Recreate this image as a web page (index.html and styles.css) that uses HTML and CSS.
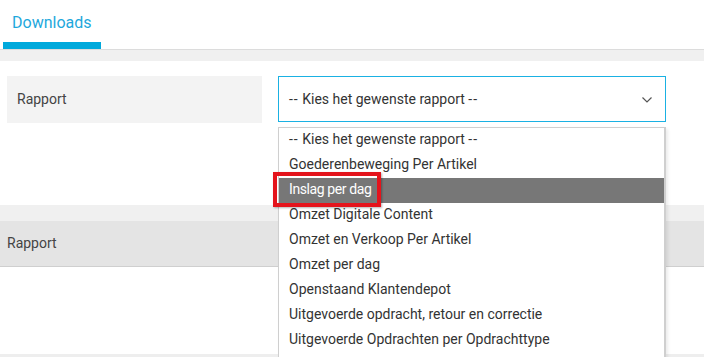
FILE: index.html
```html
<!DOCTYPE html>
<html>
<head>
<meta charset="utf-8">
<link rel="stylesheet" href="styles.css">
</head>
<body>
<div class="tabs">
  <div class="tab">Downloads</div>
</div>
<div class="tabline"></div>
<div class="form-row">
  <div class="label">Rapport</div>
  <div class="select">
    <span><span class="dash">--</span> Kies het gewenste rapport <span class="dash">--</span></span>
    <svg class="chev" width="12" height="8" viewBox="0 0 12 8"><polyline points="1.5,1.5 6,6 10.5,1.5" fill="none" stroke="#555" stroke-width="1.2"/></svg>
  </div>
</div>
<div class="spacer"></div>
<div class="section">
  <div class="thead">Rapport</div>
  <div class="tbody"></div>
</div>
<div class="dropdown">
  <div class="opt"><span class="dash">--</span> Kies het gewenste rapport <span class="dash">--</span></div>
  <div class="opt">Goederenbeweging Per Artikel</div>
  <div class="opt active">Inslag per dag</div>
  <div class="opt">Omzet Digitale Content</div>
  <div class="opt">Omzet en Verkoop Per Artikel</div>
  <div class="opt">Omzet per dag</div>
  <div class="opt">Openstaand Klantendepot</div>
  <div class="opt">Uitgevoerde opdracht, retour en correctie</div>
  <div class="opt">Uitgevoerde Opdrachten per Opdrachttype</div>
</div>
<div class="marker"></div>
</body>
</html>
```
FILE: styles.css
```css
html, body {
  margin: 0;
  padding: 0;
  background: #fff;
  font-family: Roboto, "Noto Sans", sans-serif;
  color: #333;
  overflow: hidden;
}
.tabs {
  height: 49px;
  padding-left: 3px;
  display: flex;
}
.tab {
  width: 98px;
  box-sizing: border-box;
  height: 49px;
  border-bottom: 7px solid #00a9dc;
  color: #1ea8dc;
  font-size: 16px;
  padding: 13px 0 0 9px;
}
.tabline {
  border-top: 1px solid #dcdcdc;
  background: #f0f0f0;
  height: 11px;
}
.form-row {
  display: flex;
  gap: 16px;
  padding: 15px 0 0 7px;
}
.label {
  width: 255px;
  height: 47px;
  background: #f3f3f3;
  box-sizing: border-box;
  padding: 15px 0 0 10px;
  font-size: 14px;
  color: #444;
}
.select {
  width: 388px;
  height: 46px;
  box-sizing: border-box;
  border: 1px solid #1ab1e3;
  display: flex;
  align-items: center;
  justify-content: space-between;
  padding: 0 12px 0 10px;
  font-size: 14px;
  color: #333;
}
.dash { letter-spacing: 1px; }
.chev { margin-top: 1px; }
.spacer { height: 82px; }
.section {
  background: #f0f0f0;
  padding-top: 16px;
}
.thead {
  background: #e4e4e4;
  border-bottom: 1px solid #cfcfcf;
  padding: 14px 0 0 7px;
  height: 31px;
  font-size: 14px;
  color: #444;
}
.tbody {
  height: 87px;
  background: #fff;
  border-bottom: 3px solid #eee;
}
.dropdown {
  position: absolute;
  left: 278px;
  top: 127px;
  width: 388px;
  box-sizing: border-box;
  background: #fff;
  border: 1px solid #cfcfcf;
  border-right-width: 2px;
  padding-bottom: 4px;
  box-shadow: 2px 2px 3px rgba(0,0,0,0.08);
}
.opt {
  height: 25px;
  line-height: 23px;
  padding-left: 10px;
  font-size: 14px;
  color: #333;
  white-space: nowrap;
}
.opt.active {
  background: #777;
  color: #fff;
  letter-spacing: -0.4px;
}
.marker {
  position: absolute;
  left: 273px;
  top: 172px;
  width: 108px;
  height: 35px;
  box-sizing: border-box;
  border: 4px solid #e4141c;
  box-shadow: 1px 1px 2px rgba(0,0,0,0.3);
}
```
